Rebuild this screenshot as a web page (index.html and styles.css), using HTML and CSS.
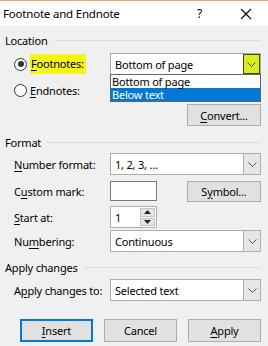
FILE: index.html
```html
<!DOCTYPE html>
<html lang="en">
<head>
    <meta charset="UTF-8">
    <title>Footnote and Endnote</title>
    <link rel="stylesheet" href="styles.css">
</head>
<body>

<div class="dialog">
    <div class="titlebar">
        <span class="title">Footnote and Endnote</span>
        <span class="help">?</span>
        <svg class="close" width="12" height="12" viewBox="0 0 12 12">
            <path d="M1 1 L11 11 M11 1 L1 11" stroke="#000" stroke-width="1.1" fill="none"/>
        </svg>
    </div>

    <div class="content">
        <div class="group-head">Location <span class="rule"></span></div>

        <div class="row row-footnotes">
            <label class="radio-label">
                <span class="radio checked"></span>
                <span class="hl"><u>F</u>ootnotes:</span>
            </label>
            <div class="combo open">
                <span class="combo-text">Bottom of page</span>
                <span class="combo-arrow hot">
                    <svg width="9" height="5" viewBox="0 0 9 5"><path d="M0.5 0.5 L4.5 4.5 L8.5 0.5" stroke="#444" fill="none"/></svg>
                </span>
                <div class="droplist">
                    <div class="item">Bottom of page</div>
                    <div class="item selected">Below text</div>
                </div>
            </div>
        </div>

        <div class="row row-endnotes">
            <label class="radio-label">
                <span class="radio"></span>
                <span><u>E</u>ndnotes:</span>
            </label>
        </div>

        <div class="row row-convert">
            <button class="btn"><u>C</u>onvert...</button>
        </div>

        <div class="group-head head-format">Format <span class="rule"></span></div>

        <div class="row row-numfmt">
            <span class="label"><u>N</u>umber format:</span>
            <div class="combo">
                <span class="combo-text">1, 2, 3, …</span>
                <span class="combo-arrow">
                    <svg width="9" height="5" viewBox="0 0 9 5"><path d="M0.5 0.5 L4.5 4.5 L8.5 0.5" stroke="#555" fill="none"/></svg>
                </span>
            </div>
        </div>

        <div class="row row-mark">
            <span class="label">C<u>u</u>stom mark:</span>
            <div class="textbox small"></div>
            <button class="btn">S<u>y</u>mbol...</button>
        </div>

        <div class="row row-start">
            <span class="label"><u>S</u>tart at:</span>
            <div class="spin">
                <span class="spin-text">1</span>
                <span class="spin-btns">
                    <span class="spin-up">
                        <svg width="7" height="4" viewBox="0 0 7 4"><path d="M0 4 L3.5 0 L7 4 Z" fill="#222"/></svg>
                    </span>
                    <span class="spin-down">
                        <svg width="7" height="4" viewBox="0 0 7 4"><path d="M0 0 L3.5 4 L7 0 Z" fill="#222"/></svg>
                    </span>
                </span>
            </div>
        </div>

        <div class="row row-numbering">
            <span class="label">Nu<u>m</u>bering:</span>
            <div class="combo">
                <span class="combo-text">Continuous</span>
                <span class="combo-arrow">
                    <svg width="9" height="5" viewBox="0 0 9 5"><path d="M0.5 0.5 L4.5 4.5 L8.5 0.5" stroke="#555" fill="none"/></svg>
                </span>
            </div>
        </div>

        <div class="group-head head-apply">Apply changes <span class="rule"></span></div>

        <div class="row row-applyto">
            <span class="label">A<u>p</u>ply changes to:</span>
            <div class="combo">
                <span class="combo-text">Selected text</span>
                <span class="combo-arrow">
                    <svg width="9" height="5" viewBox="0 0 9 5"><path d="M0.5 0.5 L4.5 4.5 L8.5 0.5" stroke="#555" fill="none"/></svg>
                </span>
            </div>
        </div>

        <div class="buttons">
            <button class="btn default"><u>I</u>nsert</button>
            <button class="btn">Cancel</button>
            <button class="btn"><u>A</u>pply</button>
        </div>
    </div>
</div>

</body>
</html>
```

FILE: styles.css
```css
body {
    margin: 0;
    background: #f0f0f0;
    font-family: "Noto Sans", "Open Sans", sans-serif;
    font-size: 11px;
    letter-spacing: -0.2px;
    color: #000;
}

u {
    text-decoration: underline;
    text-underline-offset: 2px;
}

.dialog {
    width: 268px;
    height: 346px;
    background: #f0f0f0;
    overflow: hidden;
}

.titlebar {
    height: 25px;
    background: #fff;
    border-top: 1px solid #e9a86a;
    display: flex;
    align-items: center;
    font-size: 11.5px;
}

.title {
    margin-left: 3px;
    flex: 1;
}

.help {
    margin-right: 38px;
    font-size: 12px;
}

.close {
    margin-right: 16px;
}

.content {
    padding: 0 7px 0 5px;
}

.group-head {
    display: flex;
    align-items: center;
    height: 16px;
    margin-top: 6px;
    white-space: nowrap;
}

.rule {
    flex: 1;
    height: 1px;
    background: #dcdcdc;
    margin-left: 6px;
}

.row {
    display: flex;
    align-items: center;
    height: 22px;
    padding-left: 9px;
    white-space: nowrap;
}

.row-footnotes {
    margin-top: 5px;
    position: relative;
}

.row-endnotes {
    margin-top: 4px;
}

.row-convert {
    margin-top: 3px;
    justify-content: flex-end;
}

.head-format {
    margin-top: 8px;
}

.row-numfmt {
    margin-top: 3px;
}

.row-mark {
    margin-top: 5px;
}

.row-start {
    margin-top: 4px;
}

.row-numbering {
    margin-top: 2px;
}

.head-apply {
    margin-top: 7px;
}

.row-applyto {
    margin-top: 4px;
}

.label {
    width: 96px;
    flex: none;
}

.radio-label {
    width: 96px;
    flex: none;
    display: flex;
    align-items: center;
}

.radio {
    width: 11px;
    height: 11px;
    border: 1px solid #333;
    border-radius: 50%;
    background: #fff;
    margin-right: 3px;
    position: relative;
    flex: none;
}

.radio.checked::after {
    content: "";
    position: absolute;
    left: 2.5px;
    top: 2.5px;
    width: 6px;
    height: 6px;
    border-radius: 50%;
    background: #333;
}

.hl {
    background: #f4f41a;
    padding: 2px 2px 3px 1px;
}

.combo {
    width: 151px;
    height: 22px;
    box-sizing: border-box;
    border: 1px solid #adadad;
    background: #fff;
    display: flex;
    align-items: center;
    position: relative;
}

.combo-text {
    flex: 1;
    padding-left: 4px;
}

.combo-arrow {
    width: 16px;
    height: 20px;
    background: #e6e6e6;
    border-left: 1px solid #adadad;
    display: flex;
    align-items: center;
    justify-content: center;
}

.combo-arrow.hot {
    background: #dcec1c;
    border: 1px solid #3c4a10;
    height: 18px;
    width: 15px;
}

.droplist {
    position: absolute;
    left: -1px;
    top: 20px;
    width: 151px;
    box-sizing: border-box;
    border: 1px solid #646464;
    background: #fff;
    padding: 0;
    z-index: 2;
}

.item {
    height: 13px;
    line-height: 13px;
    padding-left: 1px;
}

.item.selected {
    background: #0078d7;
    color: #fff;
}

.btn {
    width: 74px;
    height: 22px;
    box-sizing: border-box;
    border: 1px solid #adadad;
    background: #e1e1e1;
    font-family: inherit;
    font-size: 11px;
    letter-spacing: inherit;
    color: #000;
    padding: 0;
}

.row-mark .btn {
    margin-left: auto;
    height: 21px;
}

.textbox.small {
    width: 47px;
    height: 20px;
    box-sizing: border-box;
    border: 1px solid #7a7a7a;
    background: #fff;
}

.spin {
    width: 47px;
    height: 22px;
    box-sizing: border-box;
    border: 1px solid #adadad;
    background: #fff;
    display: flex;
    align-items: stretch;
}

.spin-text {
    flex: 1;
    padding-left: 4px;
    display: flex;
    align-items: center;
}

.spin-btns {
    width: 15px;
    display: flex;
    flex-direction: column;
    margin: 1px;
    gap: 1px;
}

.spin-up,
.spin-down {
    flex: 1;
    background: #e6e6e6;
    border: 1px solid #c4c4c4;
    display: flex;
    align-items: center;
    justify-content: center;
}

.buttons {
    display: flex;
    justify-content: space-between;
    margin-top: 18px;
    padding-left: 15px;
}

.buttons .btn {
    width: 73px;
    height: 23px;
}

.btn.default {
    border: 2px solid #0078d7;
}
```
